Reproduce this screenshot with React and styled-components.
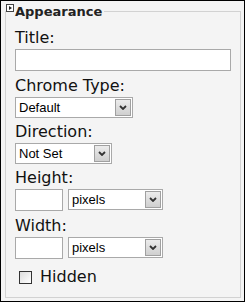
import React from 'react';
import styled, { createGlobalStyle } from 'styled-components';

const GlobalStyle = createGlobalStyle`
  html, body {
    margin: 0;
    padding: 0;
    background: #f4f4f4;
  }
  * {
    box-sizing: border-box;
  }
`;

const Panel = styled.div`
  position: relative;
  width: 245px;
  height: 302px;
  border: 1px solid #000;
  background: #f4f4f4;
  padding: 3px 3px 3px 4px;
  display: flex;
  font-family: "DejaVu Sans", Verdana, sans-serif;
  color: #111;
`;

const Toggle = styled.span`
  position: absolute;
  left: 5px;
  top: 3px;
  width: 8px;
  height: 8px;
  border: 1px solid #444;
  background: #fff;
  display: flex;
  align-items: center;
  justify-content: center;
  &::after {
    content: '';
    border-left: 3px solid #222;
    border-top: 2px solid transparent;
    border-bottom: 2px solid transparent;
    margin-left: 1px;
  }
`;

const Box = styled.fieldset`
  flex: 1;
  margin: 0;
  border: 1px solid #d2d2d2;
  padding: 10px 9px 0 9px;
  min-width: 0;
`;

const Legend = styled.legend`
  font-size: 13px;
  font-weight: bold;
  line-height: 15px;
  padding: 0 2px;
  margin-left: -2px;
  color: #222;
`;

const Field = styled.div`
  display: flex;
  flex-direction: column;
  align-items: flex-start;
  margin-bottom: ${p => p.$space ?? 5}px;
`;

const Label = styled.label`
  font-size: 16px;
  line-height: 18px;
  margin-bottom: 2px;
`;

const Row = styled.div`
  display: flex;
  gap: 5px;
`;

const TextInput = styled.input`
  width: ${p => p.$w}px;
  height: 22px;
  border: 1px solid #a9a9a9;
  background: #fff;
  margin: 0;
  padding: 0 3px;
  font: 13px "Liberation Sans", Arial, sans-serif;
`;

const SelectWrap = styled.div`
  position: relative;
  width: ${p => p.$w}px;
  height: 21px;
`;

const NativeSelect = styled.select`
  appearance: none;
  width: 100%;
  height: 100%;
  margin: 0;
  border: 1px solid #a9a9a9;
  border-radius: 0;
  background: #fff;
  padding: 0 0 0 3px;
  font: 13px "Liberation Sans", Arial, sans-serif;
  color: #000;
`;

const DropButton = styled.span`
  position: absolute;
  right: 2px;
  top: 2px;
  bottom: 2px;
  width: 16px;
  border: 1px solid #a0a0a0;
  background: linear-gradient(#ececec, #cfcfcf);
  display: flex;
  align-items: center;
  justify-content: center;
  pointer-events: none;
`;

const CheckRow = styled.label`
  display: flex;
  align-items: center;
  gap: 8px;
  margin-top: 9px;
  padding-left: 4px;
  font-size: 16px;
  line-height: 18px;
`;

const Check = styled.input`
  appearance: none;
  width: 13px;
  height: 13px;
  margin: 0;
  border: 1px solid #333;
  background: linear-gradient(135deg, #dcdcdc, #fff);
`;

const Chevron = () => (
  <svg width="8" height="5" viewBox="0 0 8 5">
    <path d="M1 1 L4 4 L7 1" fill="none" stroke="#333" strokeWidth="1.8" />
  </svg>
);

const Select = ({ w, options }) => (
  <SelectWrap $w={w}>
    <NativeSelect defaultValue={options[0]}>
      {options.map(o => <option key={o}>{o}</option>)}
    </NativeSelect>
    <DropButton><Chevron /></DropButton>
  </SelectWrap>
);

const units = ['pixels', 'percent', 'em'];

export default function App() {
  return (
    <>
      <GlobalStyle />
      <Panel>
        <Toggle />
        <Box>
          <Legend>Appearance</Legend>
          <Field $space={6}>
            <Label>Title:</Label>
            <TextInput $w={216} />
          </Field>
          <Field>
            <Label>Chrome Type:</Label>
            <Select w={118} options={['Default', 'None', 'Title Only', 'Border Only']} />
          </Field>
          <Field>
            <Label>Direction:</Label>
            <Select w={97} options={['Not Set', 'Left to Right', 'Right to Left']} />
          </Field>
          <Field $space={6}>
            <Label>Height:</Label>
            <Row>
              <TextInput $w={48} />
              <Select w={95} options={units} />
            </Row>
          </Field>
          <Field $space={0}>
            <Label>Width:</Label>
            <Row>
              <TextInput $w={48} />
              <Select w={95} options={units} />
            </Row>
          </Field>
          <CheckRow>
            <Check type="checkbox" />
            Hidden
          </CheckRow>
        </Box>
      </Panel>
    </>
  );
}
